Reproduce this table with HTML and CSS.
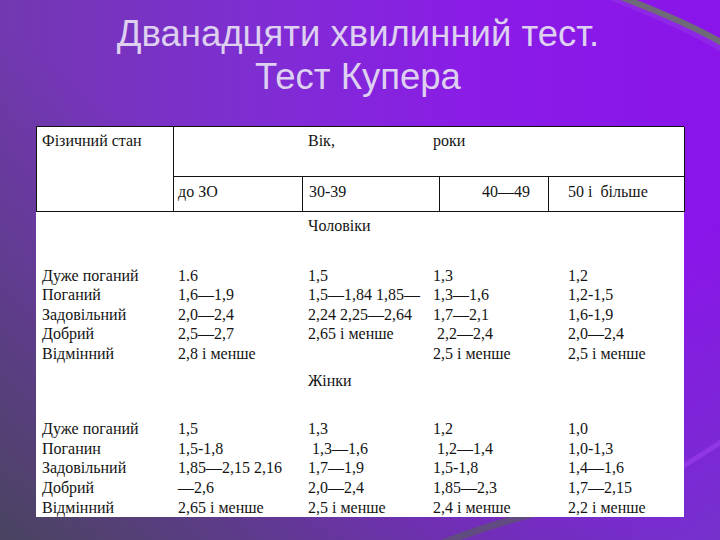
FILE: index.html
```html
<!DOCTYPE html>
<html lang="uk">
<head>
<meta charset="utf-8">
<title>Тест Купера</title>
<link rel="stylesheet" href="styles.css">
</head>
<body>
<div class="slide">
  <svg class="deco" width="720" height="540" viewBox="0 0 720 540" aria-hidden="true">
    <path d="M560 -30 C 610 0, 690 20, 740 60" fill="none" stroke="#9a5de0" stroke-opacity="0.25" stroke-width="10"/>
    <path d="M618 -4 C 650 8, 690 24, 724 44" fill="none" stroke="#6f6a78" stroke-width="6"/>
    <path d="M660 480 C 680 468, 700 456, 724 440" fill="none" stroke="#a040f0" stroke-opacity="0.6" stroke-width="5"/>
    <path d="M430 548 C 470 532, 500 522, 540 512" fill="none" stroke="#5a5868" stroke-opacity="0.7" stroke-width="7"/>
  </svg>
  <h1 class="title">Дванадцяти хвилинний тест.<br>Тест Купера</h1>
  <div class="sheet">
    <div class="head">
      <div class="cell state">Фізичний стан</div>
      <div class="cell age"><span class="vik">Вік,</span><span>роки</span></div>
      <div class="cell c1">до ЗО</div>
      <div class="cell c2">30-39</div>
      <div class="cell c3">40—49</div>
      <div class="cell c4">50 і&nbsp;&nbsp;більше</div>
    </div>
    <div class="body">
      <div class="label">Чоловіки</div>
      <div class="rows men">
        <div class="col"><div>Дуже поганий</div><div>Поганий</div><div>Задовільний</div><div>Добрий</div><div>Відмінний</div></div>
        <div class="col"><div>1.6</div><div>1,6—1,9</div><div>2,0—2,4</div><div>2,5—2,7</div><div>2,8 і менше</div></div>
        <div class="col"><div>1,5</div><div>1,5—1,84 1,85—</div><div>2,24 2,25—2,64</div><div>2,65 і менше</div></div>
        <div class="col"><div>1,3</div><div>1,3—1,6</div><div>1,7—2,1</div><div class="ind">2,2—2,4</div><div>2,5 і менше</div></div>
        <div class="col"><div>1,2</div><div>1,2-1,5</div><div>1,6-1,9</div><div>2,0—2,4</div><div>2,5 і менше</div></div>
      </div>
      <div class="label women-label">Жінки</div>
      <div class="rows women">
        <div class="col"><div>Дуже поганий</div><div>Поганин</div><div>Задовільний</div><div>Добрий</div><div>Відмінний</div></div>
        <div class="col"><div>1,5</div><div>1,5-1,8</div><div>1,85—2,15 2,16</div><div>—2,6</div><div>2,65 і менше</div></div>
        <div class="col"><div>1,3</div><div class="ind">1,3—1,6</div><div>1,7—1,9</div><div>2,0—2,4</div><div>2,5 і менше</div></div>
        <div class="col"><div>1,2</div><div class="ind">1,2—1,4</div><div>1,5-1,8</div><div>1,85—2,3</div><div>2,4 і менше</div></div>
        <div class="col"><div>1,0</div><div>1,0-1,3</div><div>1,4—1,6</div><div>1,7—2,15</div><div>2,2 і менше</div></div>
      </div>
    </div>
  </div>
</div>
</body>
</html>
```

FILE: styles.css
```css
html, body {
  margin: 0;
  padding: 0;
}

body {
  width: 720px;
  height: 540px;
  overflow: hidden;
}

.slide {
  position: relative;
  width: 720px;
  height: 540px;
  box-sizing: border-box;
  padding-top: 12px;
  overflow: hidden;
  background:
    linear-gradient(to top right, rgba(72, 68, 92, 0.95) 0%, rgba(80, 64, 112, 0.6) 22%, rgba(90, 60, 140, 0) 48%),
    linear-gradient(to top left, rgba(112, 56, 196, 0.8) 0%, rgba(112, 56, 196, 0) 30%),
    linear-gradient(to right, #7238b0 0%, #7f2ed2 35%, #8a1ce6 65%, #8a14ea 100%);
}

.deco {
  position: absolute;
  left: 0;
  top: 0;
  z-index: 0;
}

.title {
  position: relative;
  z-index: 1;
  margin: 0;
  text-align: center;
  font-family: "Liberation Sans", Arial, sans-serif;
  font-weight: normal;
  font-size: 36.5px;
  line-height: 43px;
  color: #ddd0f0;
  padding-right: 4px;
}

.sheet {
  position: relative;
  z-index: 1;
  margin: 28px 0 0 36px;
  width: 648px;
  height: 391px;
  background: #ffffff;
  font-family: "Liberation Serif", "Times New Roman", serif;
  color: #141414;
}

.head {
  display: grid;
  grid-template-columns: 137px 129px 137px 109px 136px;
  grid-template-rows: 50px 35px;
  border-top: 1px solid #111;
  border-left: 1px solid #111;
  font-size: 16px;
  line-height: 19px;
}

.cell {
  box-sizing: border-box;
  border-right: 1px solid #111;
  border-bottom: 1px solid #111;
  white-space: nowrap;
}

.state {
  grid-row: 1 / 3;
  padding: 4px 0 0 5px;
}

.age {
  grid-column: 2 / 6;
  display: flex;
  padding: 4px 0 0 134px;
}

.vik {
  width: 125px;
}

.c1, .c2, .c3, .c4 {
  padding-top: 5px;
}

.c1 { padding-left: 4px; }
.c2 { padding-left: 6px; }
.c3 { padding-left: 42px; }
.c4 { padding-left: 19px; }

.body {
  padding: 4px 0 0 6px;
  font-size: 16px;
  line-height: 19.6px;
}

.label {
  padding-left: 266px;
}

.women-label {
  margin-top: 7px;
}

.rows {
  display: grid;
  grid-template-columns: 136px 130px 125px 135px 1fr;
}

.men {
  margin-top: 30px;
}

.women {
  margin-top: 29px;
}

.col > div {
  white-space: nowrap;
  height: 19.6px;
}

.col > .ind {
  padding-left: 4px;
}
```
